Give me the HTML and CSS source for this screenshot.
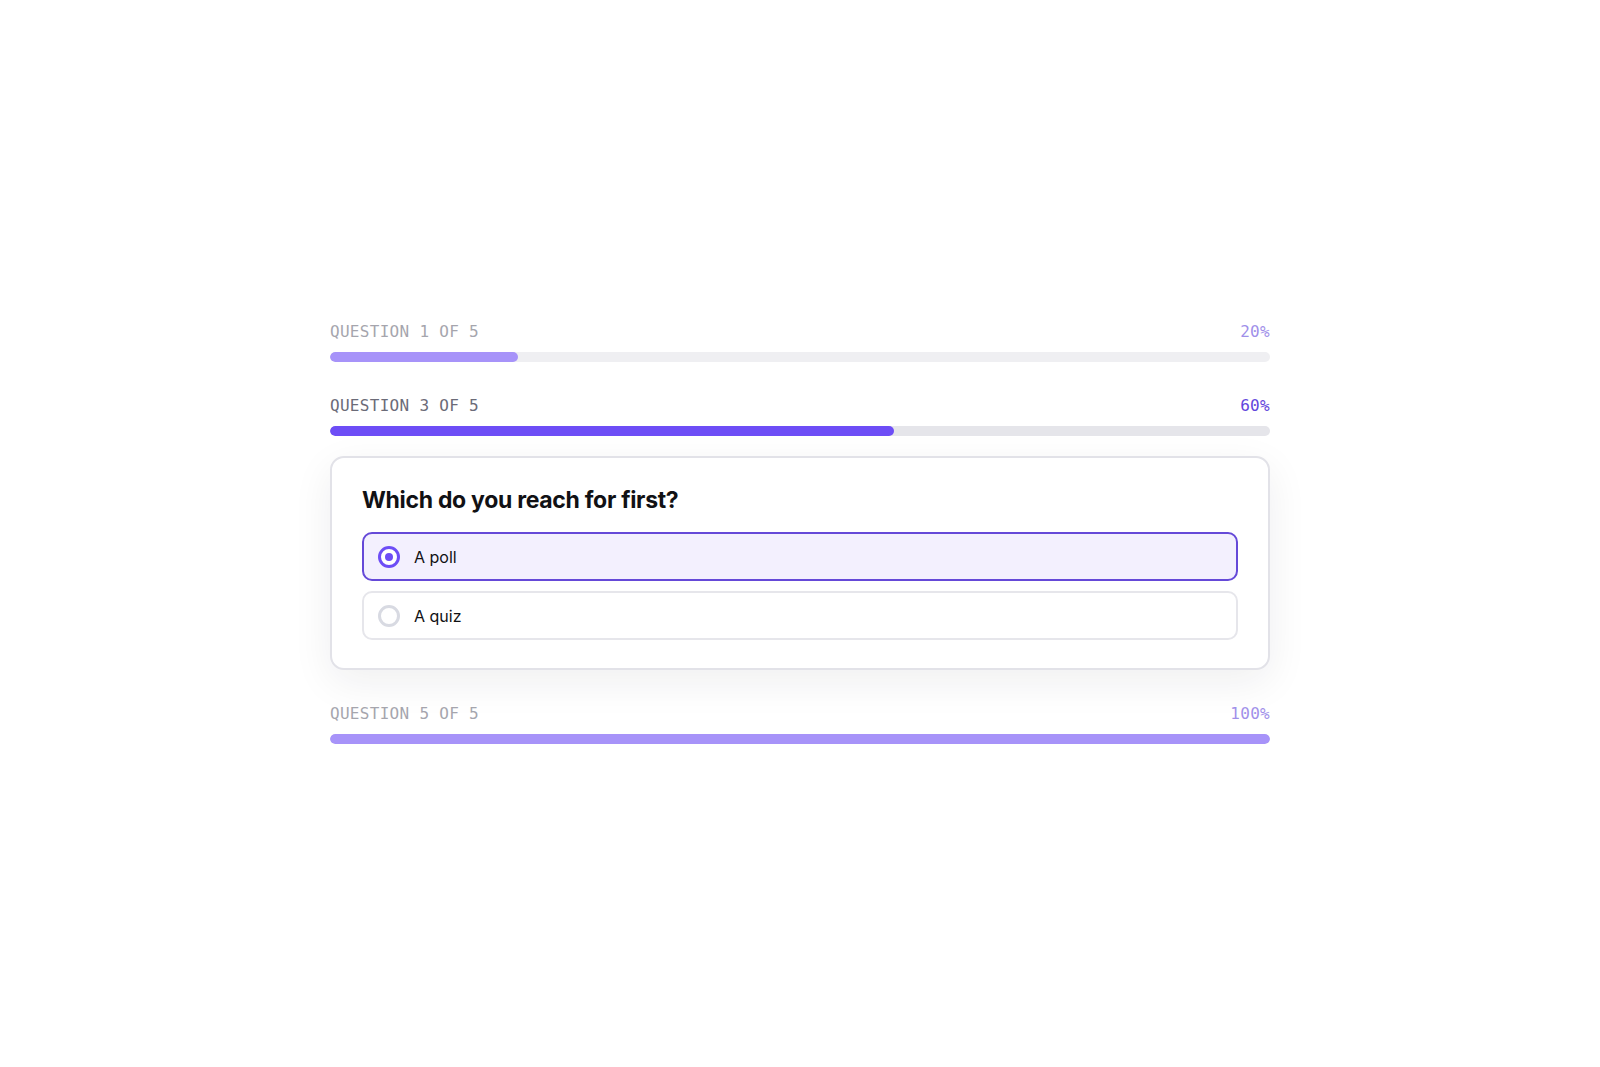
FILE: index.html
```html
<!DOCTYPE html>
<html lang="en">
<head>
  <meta charset="UTF-8" />
  <meta name="viewport" content="width=device-width, initial-scale=1.0" />
  <title>Quiz progress</title>
  <link rel="stylesheet" href="styles.css">
</head>
<body>
  <main class="quiz">

    <section class="step faded">
      <div class="step-head">
        <span class="step-label">QUESTION 1 OF 5</span>
        <span class="step-pct">20%</span>
      </div>
      <div class="track"><div class="fill" style="width: 20%;"></div></div>
    </section>

    <section class="step">
      <div class="step-head">
        <span class="step-label">QUESTION 3 OF 5</span>
        <span class="step-pct">60%</span>
      </div>
      <div class="track"><div class="fill" style="width: 60%;"></div></div>

      <div class="card">
        <h2>Which do you reach for first?</h2>
        <ul class="options">
          <li class="option selected">
            <span class="radio"></span>
            <span class="option-text">A poll</span>
          </li>
          <li class="option">
            <span class="radio"></span>
            <span class="option-text">A quiz</span>
          </li>
        </ul>
      </div>
    </section>

    <section class="step faded">
      <div class="step-head">
        <span class="step-label">QUESTION 5 OF 5</span>
        <span class="step-pct">100%</span>
      </div>
      <div class="track"><div class="fill" style="width: 100%;"></div></div>
    </section>

  </main>
</body>
</html>
```

FILE: styles.css
```css
body {
  margin: 0;
  padding: 0;
  min-height: 100vh;
  display: flex;
  align-items: center;
  justify-content: center;
  background-color: #fff;
  font-family: 'Inter', 'Liberation Sans', sans-serif;
  color: #111114;
}

.quiz {
  width: 940px;
  display: flex;
  flex-direction: column;
  gap: 35px;
}

/* steps that are done or still ahead are dimmed */
.step.faded {
  opacity: 0.6;
}

.step-head {
  display: flex;
  justify-content: space-between;
  align-items: center;
  font-family: 'DejaVu Sans Mono', 'Liberation Mono', monospace;
  font-size: 16px;
  line-height: 18px;
  letter-spacing: 0.3px;
}

.step-label {
  color: #6b6b78;
}

.step-pct {
  color: #6246dc;
}

.track {
  margin-top: 11px;
  height: 10px;
  border-radius: 5px;
  background-color: #e5e5ea;
  overflow: hidden;
}

.fill {
  height: 100%;
  border-radius: 5px;
  background-color: #6d4df6;
}

.card {
  margin-top: 20px;
  padding: 28px 30px 28px;
  border: 2px solid #e2e2e8;
  border-radius: 14px;
  background-color: #fff;
  box-shadow: 0 12px 40px rgba(24, 24, 48, 0.07);
}

.card h2 {
  margin: 0 0 18px;
  font-size: 23px;
  line-height: 28px;
  font-weight: 700;
  letter-spacing: -0.3px;
}

.options {
  list-style: none;
  margin: 0;
  padding: 0;
  display: flex;
  flex-direction: column;
  gap: 10px;
}

.option {
  box-sizing: border-box;
  height: 49px;
  padding: 0 14px;
  display: flex;
  align-items: center;
  gap: 14px;
  border: 2px solid #e6e6eb;
  border-radius: 10px;
  font-size: 16px;
}

.option.selected {
  border-color: #6549d8;
  background-color: #f3f0fe;
}

.radio {
  box-sizing: border-box;
  width: 22px;
  height: 22px;
  border-radius: 50%;
  border: 3px solid #d8dae2;
  display: flex;
  align-items: center;
  justify-content: center;
}

.option.selected .radio {
  border-color: #6d4df6;
  background-color: #fff;
}

.option.selected .radio::after {
  content: "";
  width: 8px;
  height: 8px;
  border-radius: 50%;
  background-color: #6d4df6;
}
```
